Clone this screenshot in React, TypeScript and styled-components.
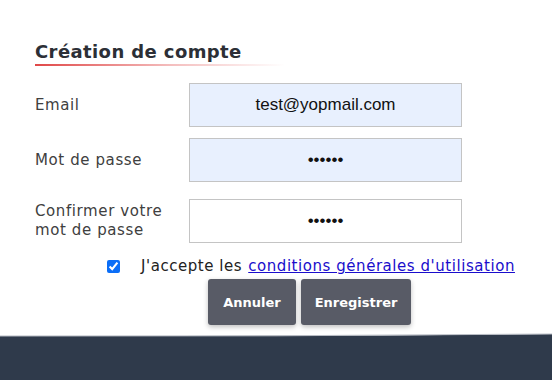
import React from "react";
import styled, { createGlobalStyle } from "styled-components";

const GlobalStyle = createGlobalStyle`
  html, body {
    margin: 0;
    padding: 0;
    background: #ffffff;
    font-family: "DejaVu Sans", "Open Sans", sans-serif;
  }
  #root {
    height: 380px;
  }
`;

const Page = styled.div`
  width: 552px;
  height: 380px;
  display: flex;
  flex-direction: column;
  overflow: hidden;
`;

const Main = styled.div`
  flex: 1;
  padding: 41px 0 0 35px;
`;

const Title = styled.h2`
  display: inline-block;
  margin: 0;
  padding: 0 43px 3px 0;
  font-size: 18px;
  letter-spacing: 0.4px;
  font-weight: 700;
  color: #2c2f36;
  line-height: 22px;
  background: linear-gradient(to right, #e04848, rgba(224, 72, 72, 0.35) 55%, rgba(224, 72, 72, 0)) no-repeat;
  background-size: 100% 2px;
  background-position: bottom left;
`;

const Form = styled.form`
  margin-top: 17px;
  display: flex;
  flex-direction: column;
`;

const Row = styled.div<{ gap: number }>`
  display: grid;
  grid-template-columns: 154px 273px;
  align-items: center;
  margin-bottom: ${p => p.gap}px;
`;

const Label = styled.label`
  font-size: 15px;
  letter-spacing: 0.6px;
  line-height: 19px;
  color: #404040;
`;

const Input = styled.input<{ filled?: boolean }>`
  box-sizing: border-box;
  width: 273px;
  height: 44px;
  border: 1px solid #c4c4c4;
  background: ${p => (p.filled ? "#e8f0fe" : "#ffffff")};
  font-family: "Liberation Sans", Arial, sans-serif;
  font-size: 17px;
  color: #111;
  text-align: center;
  outline: none;
  padding: 0 8px;
`;

const CheckRow = styled.div`
  display: flex;
  align-items: center;
  margin: 4px 0 0 71px;
  font-size: 15px;
  letter-spacing: 0.55px;
  color: #222;
`;

const Box = styled.input`
  width: 13px;
  height: 13px;
  margin: 0 21px 0 1px;
  accent-color: #0b6ef7;
`;

const Link = styled.a`
  color: #1a0dcc;
  text-decoration: underline;
  margin-left: 6px;
`;

const Buttons = styled.div`
  display: flex;
  gap: 5px;
  margin: 4px 0 0 173px;
`;

const Button = styled.button<{ w: number }>`
  width: ${p => p.w}px;
  height: 46px;
  border: none;
  border-radius: 3px;
  background: #585b66;
  color: #ffffff;
  font-family: "DejaVu Sans", sans-serif;
  font-weight: 700;
  font-size: 13px;
  box-shadow: 0 2px 5px rgba(0, 0, 0, 0.25);
`;

const Footer = styled.div`
  position: relative;
  height: 44px;
  background: #2f3a4b;
`;

const Wave = styled.svg`
  position: absolute;
  left: 0;
  top: -3px;
  width: 552px;
  height: 6px;
`;

export default function App() {
  return (
    <Page>
      <GlobalStyle />
      <Main>
        <Title>Création de compte</Title>
        <Form>
          <Row gap={11}>
            <Label>Email</Label>
            <Input filled readOnly value="test@yopmail.com" />
          </Row>
          <Row gap={17}>
            <Label>Mot de passe</Label>
            <Input filled readOnly type="password" value="secret" />
          </Row>
          <Row gap={10}>
            <Label>
              Confirmer votre
              <br />
              mot de passe
            </Label>
            <Input readOnly type="password" value="secret" />
          </Row>
          <CheckRow>
            <Box type="checkbox" defaultChecked />
            <span>J'accepte les</span>
            <Link href="#">conditions générales d'utilisation</Link>
          </CheckRow>
          <Buttons>
            <Button w={88} type="button">Annuler</Button>
            <Button w={110} type="button">Enregistrer</Button>
          </Buttons>
        </Form>
      </Main>
      <Footer>
        <Wave viewBox="0 0 552 6" preserveAspectRatio="none">
          <path d="M0 6 L0 3 Q276 3.6 552 1 L552 6 Z" fill="#2f3a4b" />
          <path d="M0 3 Q276 3.6 552 1" stroke="#b8bcc4" strokeWidth="1" fill="none" />
        </Wave>
      </Footer>
    </Page>
  );
}
